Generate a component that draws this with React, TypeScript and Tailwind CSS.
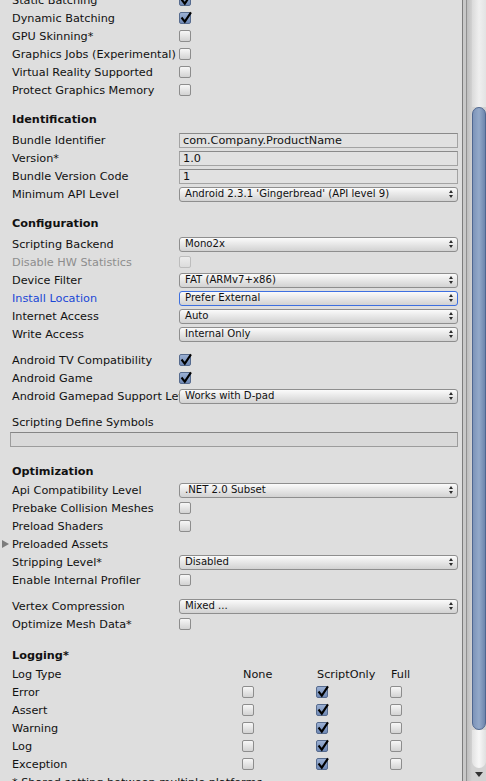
import React from "react";

const Check = () => (
  <svg viewBox="0 0 12 12" className="absolute left-[0px] top-[-1px] h-[12px] w-[12px] overflow-visible">
    <path d="M2.2 6.3 L4.8 9.6 L10.4 1.2" fill="none" stroke="#000" strokeWidth="2.1" strokeLinecap="square" />
  </svg>
);

function Box({ checked = false, disabled = false }: { checked?: boolean; disabled?: boolean }) {
  if (checked)
    return (
      <div className="relative h-[12px] w-[12px] shrink-0 rounded-[2px] border border-[#566b8e] bg-gradient-to-b from-[#9bb0d3] to-[#7089b5]">
        <Check />
      </div>
    );
  if (disabled)
    return <div className="h-[12px] w-[12px] shrink-0 rounded-[2px] border border-[#bdbdbd] bg-gradient-to-b from-[#ececec] to-[#dcdcdc]" />;
  return <div className="h-[12px] w-[12px] shrink-0 rounded-[2px] border border-[#8d8d8d] bg-gradient-to-b from-[#f7f7f7] to-[#d3d3d3]" />;
}

const Arrows = () => (
  <svg viewBox="0 0 4 8" className="h-[8px] w-[4px] shrink-0">
    <polygon points="0,3 2,0 4,3" fill="#2a2a2a" />
    <polygon points="0,5 2,8 4,5" fill="#2a2a2a" />
  </svg>
);

function Popup({ value, focused = false }: { value: string; focused?: boolean }) {
  return (
    <div
      className={
        focused
          ? "flex h-[15px] items-center rounded-[3px] border border-[#3d6fe0] bg-gradient-to-b from-[#fbfbfb] to-[#d2d2d2] pl-[5px] pr-[4px] text-[10.15px] text-[#111]"
          : "flex h-[15px] items-center rounded-[3px] border border-[#8e8e8e] bg-gradient-to-b from-[#fbfbfb] to-[#d2d2d2] pl-[5px] pr-[4px] text-[10.15px] text-[#111]"
      }
    >
      <span className="flex-1 whitespace-nowrap leading-none">{value}</span>
      <Arrows />
    </div>
  );
}

function TextField({ value }: { value: string }) {
  return (
    <div className="flex h-[15px] items-center border border-[#a3a3a3] border-t-[#8a8a8a] bg-[#e1e1e1] pl-[3px] pt-[2px] text-[#111]">
      <span className="leading-none">{value}</span>
    </div>
  );
}

type RowProps = {
  label: string;
  children?: React.ReactNode;
  tone?: "normal" | "disabled" | "blue";
  foldout?: boolean;
};

function Row({ label, children, tone = "normal", foldout = false }: RowProps) {
  const color = tone === "disabled" ? "text-[#8d8d8d]" : tone === "blue" ? "text-[#1a47d6]" : "text-[#111]";
  return (
    <div className="flex h-[18px] items-center">
      <div className={`flex h-[18px] w-[179px] shrink-0 items-center overflow-hidden whitespace-nowrap pt-[2px] ${foldout ? "pl-[2px]" : "pl-[12px]"} ${color}`}>
        {foldout && (
          <svg viewBox="0 0 7 8" className="-mt-[2px] mr-[3px] h-[8px] w-[7px] shrink-0">
            <polygon points="0,0 7,4 0,8" fill="#7c7c7c" />
          </svg>
        )}
        <span className="leading-none">{label}</span>
      </div>
      <div className="flex flex-1 items-center pr-[4px]">{children}</div>
    </div>
  );
}

function Header({ title }: { title: string }) {
  return (
    <div className="flex h-[18px] items-center pl-[12px] pt-[4px] font-bold text-[#111]">
      <span className="leading-none">{title}</span>
    </div>
  );
}

function LogRow({ label }: { label: string }) {
  return (
    <div className="flex h-[18px] items-center">
      <div className="flex h-[18px] w-[242px] shrink-0 items-center pl-[12px] pt-[2px] text-[#111]">
        <span className="leading-none">{label}</span>
      </div>
      <div className="w-[74px] shrink-0">
        <Box />
      </div>
      <div className="w-[74px] shrink-0">
        <Box checked />
      </div>
      <div className="w-[74px] shrink-0">
        <Box />
      </div>
    </div>
  );
}

function Scrollbar() {
  return (
    <div className="flex h-full w-[24px] shrink-0">
      <div className="w-px bg-[#7c7c7c]" />
      <div className="w-[3px] bg-[#c8c8c8]" />
      <div className="w-px bg-[#909090]" />
      <div className="w-[5px] bg-gradient-to-r from-[#bdbdbd] to-[#d2d2d2]" />
      <div className="flex w-[14px] flex-col bg-[#d2d2d2]">
        <div className="h-[107px] bg-gradient-to-r from-[#dadada] via-[#efefef] to-[#e3e3e3]" />
        <div className="h-[623px] rounded-[7px] border border-[#4f6790] bg-gradient-to-r from-[#7d94b9] via-[#93a9c9] to-[#6e86ad]" />
        <div className="h-[38px] rounded-b-[7px] bg-gradient-to-r from-[#e2e2e2] via-[#f7f7f7] to-[#e0e0e0]" />
        <div className="flex flex-1 items-center justify-center pr-[1px]">
          <svg viewBox="0 0 8 5" className="h-[5px] w-[8px]">
            <polygon points="0,0 8,0 4,5" fill="#333" />
          </svg>
        </div>
      </div>
    </div>
  );
}

export default function App() {
  return (
    <div className="flex h-[781px] w-[486px] overflow-hidden bg-[#dedede] font-['DejaVu_Sans',sans-serif] text-[11.25px]">
      <div className="h-full w-[462px] shrink-0 overflow-hidden">
        <div className="-mt-[9px] flex flex-col">
          <Row label="Static Batching"><Box checked /></Row>
          <Row label="Dynamic Batching"><Box checked /></Row>
          <Row label="GPU Skinning*"><Box /></Row>
          <Row label="Graphics Jobs (Experimental)"><Box /></Row>
          <Row label="Virtual Reality Supported"><Box /></Row>
          <Row label="Protect Graphics Memory"><Box /></Row>

          <div className="h-[10px]" />
          <Header title="Identification" />
          <div className="h-[4px]" />
          <Row label="Bundle Identifier"><div className="flex-1"><TextField value="com.Company.ProductName" /></div></Row>
          <Row label="Version*"><div className="flex-1"><TextField value="1.0" /></div></Row>
          <Row label="Bundle Version Code"><div className="flex-1"><TextField value="1" /></div></Row>
          <Row label="Minimum API Level"><div className="flex-1"><Popup value="Android 2.3.1 'Gingerbread' (API level 9)" /></div></Row>

          <div className="h-[10px]" />
          <Header title="Configuration" />
          <div className="h-[4px]" />
          <Row label="Scripting Backend"><div className="flex-1"><Popup value="Mono2x" /></div></Row>
          <Row label="Disable HW Statistics" tone="disabled"><Box disabled /></Row>
          <Row label="Device Filter"><div className="flex-1"><Popup value="FAT (ARMv7+x86)" /></div></Row>
          <Row label="Install Location" tone="blue"><div className="flex-1"><Popup value="Prefer External" focused /></div></Row>
          <Row label="Internet Access"><div className="flex-1"><Popup value="Auto" /></div></Row>
          <Row label="Write Access"><div className="flex-1"><Popup value="Internal Only" /></div></Row>

          <div className="h-[8px]" />
          <Row label="Android TV Compatibility"><Box checked /></Row>
          <Row label="Android Game"><Box checked /></Row>
          <Row label="Android Gamepad Support Level"><div className="flex-1"><Popup value="Works with D-pad" /></div></Row>

          <div className="h-[8px]" />
          <Row label="Scripting Define Symbols" />
          <div className="mt-[1px] pl-[10px] pr-[4px]">
            <div className="h-[15px] border border-[#9c9c9c] border-t-[#858585] bg-[#d9d9d9]" />
          </div>

          <div className="h-[14px]" />
          <Header title="Optimization" />
          <div className="h-[2px]" />
          <Row label="Api Compatibility Level"><div className="flex-1"><Popup value=".NET 2.0 Subset" /></div></Row>
          <Row label="Prebake Collision Meshes"><Box /></Row>
          <Row label="Preload Shaders"><Box /></Row>
          <Row label="Preloaded Assets" foldout />
          <Row label="Stripping Level*"><div className="flex-1"><Popup value="Disabled" /></div></Row>
          <Row label="Enable Internal Profiler"><Box /></Row>

          <div className="h-[8px]" />
          <Row label="Vertex Compression"><div className="flex-1"><Popup value="Mixed ..." /></div></Row>
          <Row label="Optimize Mesh Data*"><Box /></Row>

          <div className="h-[12px]" />
          <Header title="Logging*" />
          <div className="h-[2px]" />
          <div className="flex h-[18px] items-center pt-[2px] text-[#111]">
            <div className="w-[243px] shrink-0 pl-[12px] leading-none">Log Type</div>
            <div className="w-[74px] shrink-0 leading-none">None</div>
            <div className="w-[74px] shrink-0 leading-none">ScriptOnly</div>
            <div className="w-[74px] shrink-0 leading-none">Full</div>
          </div>
          <LogRow label="Error" />
          <LogRow label="Assert" />
          <LogRow label="Warning" />
          <LogRow label="Log" />
          <LogRow label="Exception" />
          <div className="flex h-[18px] items-center pl-[12px] pt-[2px] text-[#111]">
            <span className="whitespace-nowrap leading-none">* Shared setting between multiple platforms.</span>
          </div>
        </div>
      </div>
      <Scrollbar />
    </div>
  );
}
